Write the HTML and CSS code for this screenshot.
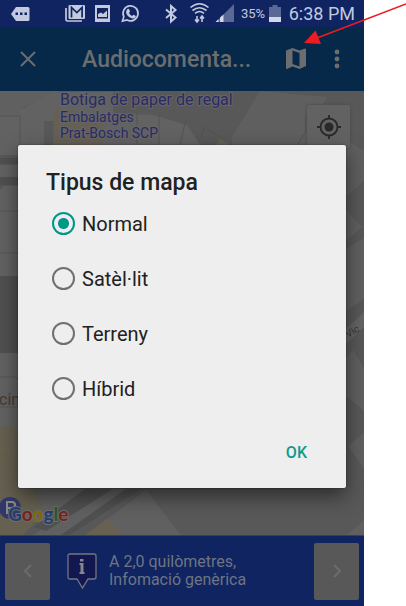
FILE: index.html
```html
<!DOCTYPE html>
<html lang="ca">
<head>
<meta charset="utf-8">
<title>Tipus de mapa</title>
<link rel="stylesheet" href="styles.css">
</head>
<body>
<div class="phone">
  <div class="status">
    <svg class="status-icons" width="240" height="27" viewBox="0 0 240 27" aria-hidden="true">
      <path fill="#c3c9de" d="M11 14l5-7h12q1.500 0 1.500 1.500v11q0 1.500-1.500 1.500H16z"/>
      <path fill="#0f2461" d="M15.500 12.500h2.500v2.500h-2.500zM20 12.500h2.500v2.500h-2.500zM24.500 12.500h2.500v2.500h-2.500z"/>
      <path fill="none" stroke="#c3c9de" stroke-width="1.700" d="M66 8v11.500q0 1.500 1.500 1.500H82"/>
      <rect x="68.500" y="5" width="16.500" height="14" rx="1" fill="#c3c9de"/>
      <path fill="none" stroke="#0f2461" stroke-width="1.700" d="M71.500 17.500V7.500l5.300 5 5.300-5v10"/>
      <path fill="#c3c9de" fill-rule="evenodd" d="M95 5h15v17H95zM97 8v10.500h11V8z"/>
      <path fill="#c3c9de" d="M98 17v-3l3-1.500 2 1.500 4-3.500V17z"/>
      <path fill="none" stroke="#c3c9de" stroke-width="1.700" d="M122.500 21l1.300-4.300A7.500 7.500 0 1 1 127 20z"/>
      <path fill="#c3c9de" d="M127 9.500q1.500-1.500 2.500.5l.5 1.500-1 1.500q1 2 3 3l1.500-1.200 2 1q1 .7-.5 2-2 1.500-5-.3-3.500-2-4-5.500z"/>
      <path fill="none" stroke="#c3c9de" stroke-width="2" d="M166 9.500l9.500 8-4.500 4V6l4.500 4-9.500 8"/>
      <g fill="none" stroke="#c3c9de" stroke-width="1.600"><path d="M190.500 7.500q9-7.500 18 0M192.500 10.500q7-5.500 14 0M195 13.300q4.500-3.500 9 0"/><path d="M197 16v5.500m-2-2l2 2.500 2-2.500M202 22v-5.500m-2 2l2-2.500 2 2.500"/></g>
      <path fill="#596895" d="M216 22L234 4v18z"/>
      <path fill="#d3d7e6" d="M215.500 22l3-3v3zM220 22v-4.500l3.500-3V22z"/>
    </svg>
    <span class="battery-text">35%</span>
    <svg width="12" height="17" viewBox="0 0 12 17" aria-hidden="true"><path fill="#596895" d="M0 2h3.500V0h5v2H12v10H0z"/><path fill="#d3d7e6" d="M0 12h12v5H0z"/></svg>
    <span class="clock">6:38 PM</span>
  </div>
  <header class="appbar">
    <button class="icon-button close" aria-label="Tanca"><svg width="16" height="16" viewBox="0 0 16 16"><path d="M1 1l14 14M15 1L1 15" fill="none" stroke="#6c6d6f" stroke-width="2"/></svg></button>
    <h1>Audiocomenta...</h1>
    <button class="icon-button map-button" aria-label="Mapa"><svg width="22" height="22" viewBox="0 0 22 22"><path fill="#6c6d6f" fill-rule="evenodd" d="M1 2.500L7.500 0l7 2.500L20 .500q1-.2 1 .8V18l-6.500 3-7-2.500L2 21q-1 .3-1-.8zM7.500 2.500v13.500l7 2.500V5z"/></svg></button>
    <button class="icon-button more" aria-label="Més opcions"><svg width="6" height="20" viewBox="0 0 6 20" fill="#6c6d6f"><circle cx="3" cy="3" r="2.400"/><circle cx="3" cy="10" r="2.400"/><circle cx="3" cy="17" r="2.400"/></svg></button>
  </header>
  <main class="map">
    <svg class="map-canvas" viewBox="0 91 364 444" preserveAspectRatio="xMinYMin slice" role="img" aria-label="Mapa">
      <rect y="91" width="364" height="444" fill="#585858"/>
      <path fill="#606060" d="M0 91h60L22 108v10H0z"/>
      <path fill="#626262" d="M20 110l34-18h59v21l40 2 34 10 20 30H54v-34H20zM0 117h20v4h24v34H0zM0 165h18v12H0zM4 186h14v90H0v-86zM0 353h18v75H0z"/>
      <path fill="#505050" d="M0 158h18v6H0zM0 177h18v8H0zM0 276h18v77H0z"/>
      <path fill="none" stroke="#545454" d="M0 116h20v38M0 211h18M0 253h18M0 377h15l3 2M0 407h18M137 113v35M159 114v35M186 119l-7 30"/>
      <path fill="#666054" d="M54 110h22v8h27v30H53zM216 148l4-11 9 5v8z"/>
      <path fill="#656050" d="M0 426l18 2v61h15l14 21-24 25H0z"/>
      <path stroke="#6d6548" fill="none" d="M0 450h18"/>
      <path fill="#5f5f5f" d="M260 91l67 6-12 22 49 32v30l-18 16v-40H232v-20z"/>
      <path fill="none" stroke="#515151" d="M200 138l5-11 23 16M298 144l8-13v-17"/>
      <path fill="#606060" d="M346 210l16 17-16 14zM346 249l18-11v61l-18 12zM346 358l7-8 11 18v43l-18-15z"/>
      <path fill="#606060" d="M364 433v36l-16-23zM364 520v15h-17z"/>
      <path fill="#646464" d="M346 329l18-17v15l-18 17z"/>
      <path fill="#606060" d="M34 489h53L47 520zM33 535l73-46h27l-62 46zM86 535l60-45 35 45z"/>
      <path fill="#505050" d="M85 489h28l-67 42-12-4zM126 489h15l-71 46H61z"/>
      <path fill="#686050" d="M108 518l13 17H85z"/>
      <g font-family="Roboto, sans-serif" fill="#2a2a66" stroke="#666668" stroke-width="2" paint-order="stroke">
        <text x="60" y="105" font-size="16">Botiga de paper de regal</text>
        <text x="60" y="122" font-size="14">Embalatges</text>
        <text x="60" y="138" font-size="14">Prat-Bosch SCP</text>
      </g>
      <text x="-1" y="405" font-family="Roboto, sans-serif" font-size="16" fill="#4a382e">cin</text>
      <text x="348" y="338" font-family="Roboto, sans-serif" font-size="10" fill="#383838" transform="rotate(-30 348 338)">Vic</text>
      <circle cx="10" cy="508" r="11" fill="#32386c"/>
      <path fill="none" stroke="#8a8a8a" stroke-width="2" d="M7 514v-12h5q3 0 3 3t-3 3H8"/>
      <text x="8" y="521" font-family="Lato, sans-serif" font-size="19" font-weight="700" stroke="#6d6d6d" stroke-width="2" paint-order="stroke"><tspan fill="#253f70">G</tspan><tspan fill="#78231d">o</tspan><tspan fill="#80690f">o</tspan><tspan fill="#253f70">g</tspan><tspan fill="#205b32">l</tspan><tspan fill="#78231d">e</tspan></text>
    </svg>
    <button class="locate" aria-label="La meva ubicació"><svg width="26" height="26" viewBox="0 0 26 26"><circle cx="13" cy="13" r="8.500" fill="none" stroke="#292929" stroke-width="1.800"/><circle cx="13" cy="13" r="4.500" fill="#292929"/><path d="M13 1v4M13 21v4M1 13h4M21 13h4" stroke="#292929" stroke-width="1.800"/></svg></button>
  </main>
  <footer class="bottom">
    <button class="nav" aria-label="Anterior"><svg width="10" height="14" viewBox="0 0 10 14"><path d="M8 1L2 7l6 6" fill="none" stroke="#6c6c6c" stroke-width="2"/></svg></button>
    <svg class="pin" width="30" height="36" viewBox="0 0 30 36" aria-hidden="true"><path fill="#13174f" stroke="#737584" stroke-width="1.300" d="M3 1h24q2 0 2 2v21q0 2-2 2h-6l-5.500 9-5.500-9H3q-2 0-2-2V3q0-2 2-2z"/><path fill="#85868e" d="M13 6h3.500v2.500H13zM12.500 10h4v9h1v2h-5v-2h1v-7h-1z"/></svg>
    <p class="info">A 2,0 quilòmetres,<br>Infomació genèrica</p>
    <button class="nav" aria-label="Següent"><svg width="10" height="14" viewBox="0 0 10 14"><path d="M2 1l6 6-6 6" fill="none" stroke="#6c6c6c" stroke-width="2"/></svg></button>
  </footer>
  <form class="dialog" role="dialog" aria-labelledby="dialog-title">
    <h2 id="dialog-title">Tipus de mapa</h2>
    <div class="options">
      <label><input type="radio" name="type" checked>Normal</label>
      <label><input type="radio" name="type">Satèl·lit</label>
      <label><input type="radio" name="type">Terreny</label>
      <label><input type="radio" name="type">Híbrid</label>
    </div>
    <button class="ok" type="button">OK</button>
  </form>
</div>
<svg class="arrow" width="104" height="48" viewBox="0 0 104 48" aria-hidden="true"><path d="M104 4L15 38" stroke="#ed1c24" stroke-width="1.600"/><path fill="#ed1c24" d="M2 43l11.500-12.500L19 44z"/></svg>
</body>
</html>
```
FILE: styles.css
```css
* { box-sizing: border-box; }

body {
  margin: 0;
  background: #fff;
  font-family: Roboto, sans-serif;
  position: relative;
}

button {
  border: 0;
  padding: 0;
  background: none;
  font: inherit;
}

svg { display: block; flex: none; }

h1, h2, p { margin: 0; }

.phone {
  position: relative;
  display: flex;
  flex-direction: column;
  min-height: 100vh;
  margin-right: 42px;
  overflow: hidden;
}

.status {
  display: flex;
  align-items: center;
  height: 27px;
  padding-right: 9px;
  background: #0f2461;
  color: #c3c9de;
}

.battery-text {
  font-size: 13px;
  margin: 0 4px 0 1px;
}

.clock {
  margin-left: auto;
  font-size: 18px;
}

.appbar {
  display: flex;
  align-items: center;
  height: 64px;
  padding: 0 24px 0 20px;
  background: #06294a;
  color: #6c6d6f;
}

.icon-button { display: flex; }

.close { margin-right: 46px; }

.appbar h1 {
  flex: 1;
  font-size: 23px;
  font-weight: 500;
  white-space: nowrap;
}

.map-button { margin-right: 27px; }

.map {
  position: relative;
  flex: 1;
  background: #585858;
}

.map-canvas {
  position: absolute;
  width: 100%;
  height: 100%;
}

.locate {
  position: absolute;
  top: 14px;
  right: 14px;
  display: grid;
  place-items: center;
  width: 43px;
  height: 43px;
  border-radius: 2px;
  background: #626262;
  box-shadow: 0 0 3px #464646;
}

.bottom {
  display: flex;
  align-items: center;
  height: 71px;
  padding: 0 5px;
  background: #0f2461;
  border-top: 1px solid #33405f;
  color: #6e7484;
}

.nav {
  display: grid;
  place-items: center;
  width: 45px;
  height: 57px;
  border-radius: 2px;
  background: #585858;
}

.pin { margin: 0 12px 0 17px; }

.info {
  flex: 1;
  font-size: 16px;
  line-height: 18px;
  white-space: nowrap;
}

.dialog {
  position: absolute;
  top: 145px;
  left: 18px;
  right: 18px;
  display: flex;
  flex-direction: column;
  padding: 24px 28px 20px;
  border-radius: 2px;
  background: #eee;
  box-shadow: 0 8px 20px rgba(0, 0, 0, .5), 0 0 2px rgba(0, 0, 0, .4);
  color: #212121;
}

.dialog h2 {
  font-size: 23px;
  font-weight: 500;
  line-height: 27px;
}

.options label {
  display: flex;
  align-items: center;
  height: 55px;
  padding-left: 6px;
  font-size: 20px;
}

.options input {
  appearance: none;
  width: 23px;
  height: 23px;
  margin: 0 7px 0 0;
  border: 2px solid #707070;
  border-radius: 50%;
}

.options input:checked {
  border-color: #009688;
  background: radial-gradient(circle, #009688 5px, transparent 6px);
}

.ok {
  align-self: flex-end;
  height: 32px;
  margin-top: 20px;
  padding: 0 11px;
  color: #119a8c;
  font-size: 16px;
  font-weight: 500;
}

.arrow {
  position: absolute;
  top: 0;
  right: 0;
}
```
